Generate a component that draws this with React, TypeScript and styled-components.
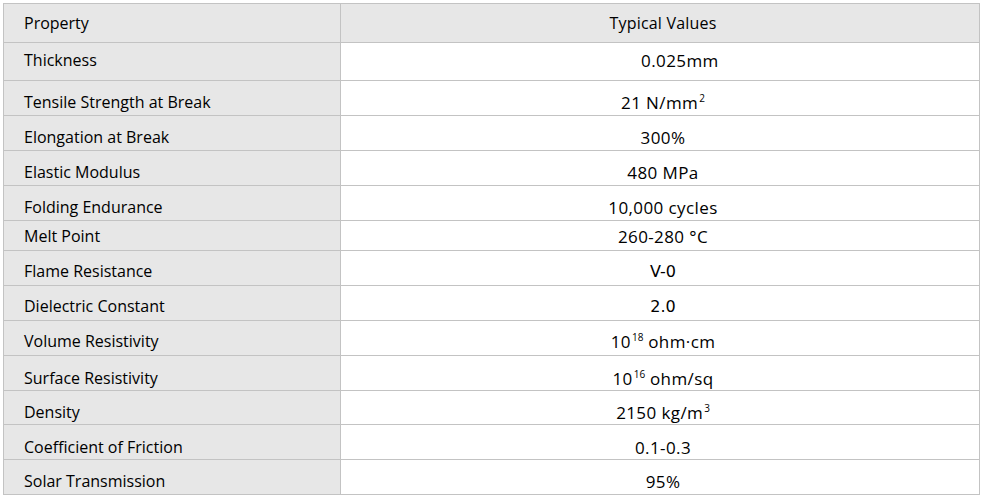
import React from "react";
import styled, { createGlobalStyle } from "styled-components";

const Global = createGlobalStyle`
  html, body { margin: 0; padding: 0; background: #ffffff; }
  body { font-family: "Open Sans", "Noto Sans", sans-serif; color: #000000; }
`;

const Page = styled.div`
  padding: 3px 0 0 3px;
`;

const Table = styled.div`
  display: grid;
  grid-template-columns: 337px 639px;
  width: 977px;
  border-top: 1px solid #c3c3c3;
  border-left: 1px solid #c3c3c3;
  box-sizing: border-box;
`;

const Cell = styled.div<{ $h: number; $pad: number; $shaded?: boolean }>`
  box-sizing: border-box;
  height: ${(p) => p.$h}px;
  padding-top: ${(p) => p.$pad}px;
  border-right: 1px solid #c3c3c3;
  border-bottom: 1px solid #c3c3c3;
  background: ${(p) => (p.$shaded ? "#e7e7e7" : "#ffffff")};
  line-height: 20px;
  white-space: pre;
  overflow: hidden;
`;

const LabelCell = styled(Cell)`
  padding-left: 20px;
  font-size: 16px;
`;

const ValueCell = styled(Cell)<{ $head?: boolean; $mono?: boolean }>`
  text-align: center;
  padding-left: 6px;
  font-size: ${(p) => (p.$head ? 16 : 17)}px;
  letter-spacing: ${(p) => (p.$head ? 0.2 : 0.4)}px;
  font-family: ${(p) =>
    p.$mono ? '"DejaVu Sans", "Open Sans", sans-serif' : '"Open Sans", "Noto Sans", sans-serif'};
  ${(p) => (p.$mono ? "font-size: 16px; letter-spacing: 0;" : "")}
`;

const Sup = styled.sup`
  font-size: 10px;
  line-height: 0;
  vertical-align: 7px;
  margin-left: 1px;
  letter-spacing: 0;
`;

type Row = {
  label: string;
  value: React.ReactNode;
  h: number;
  pad: number;
  mono?: boolean;
};

const rows: Row[] = [
  { label: "Thickness", value: "       0.025mm", h: 38, pad: 7 },
  { label: "Tensile Strength at Break", value: <>21 N/mm<Sup>2</Sup></>, h: 35, pad: 11 },
  { label: "Elongation at Break", value: "300%", h: 35, pad: 11 },
  { label: "Elastic Modulus", value: "480 MPa", h: 35, pad: 11 },
  { label: "Folding Endurance", value: "10,000 cycles", h: 35, pad: 11 },
  { label: "Melt Point", value: "260-280 °C", h: 30, pad: 5 },
  { label: "Flame Resistance", value: "V-0", h: 35, pad: 10, mono: true },
  { label: "Dielectric Constant", value: "2.0", h: 35, pad: 10, mono: true },
  { label: "Volume Resistivity", value: <>10<Sup>18</Sup> ohm·cm</>, h: 35, pad: 10 },
  { label: "Surface Resistivity", value: <>10<Sup>16</Sup> ohm/sq</>, h: 35, pad: 12 },
  { label: "Density", value: <>2150 kg/m<Sup>3</Sup></>, h: 34, pad: 11 },
  { label: "Coefficient of Friction", value: "0.1-0.3", h: 35, pad: 12 },
  { label: "Solar Transmission", value: "95%", h: 35, pad: 11 },
];

export default function App() {
  return (
    <Page>
      <Global />
      <Table>
        <LabelCell $h={39} $pad={9} $shaded>
          Property
        </LabelCell>
        <ValueCell $h={39} $pad={9} $shaded $head>
          Typical Values
        </ValueCell>
        {rows.map((r) => (
          <React.Fragment key={r.label}>
            <LabelCell $h={r.h} $pad={r.pad} $shaded>
              {r.label}
            </LabelCell>
            <ValueCell $h={r.h} $pad={r.pad + 1} $mono={r.mono}>
              {r.value}
            </ValueCell>
          </React.Fragment>
        ))}
      </Table>
    </Page>
  );
}
